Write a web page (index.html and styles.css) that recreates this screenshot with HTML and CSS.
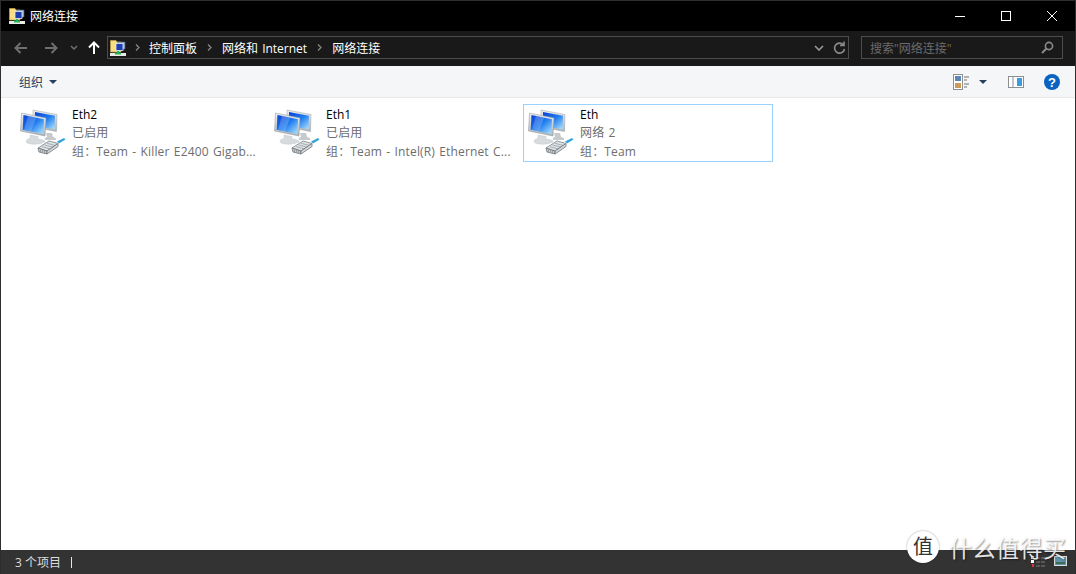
FILE: index.html
```html
<!DOCTYPE html>
<html lang="zh-CN">
<head>
    <meta charset="UTF-8">
    <title>网络连接</title>
    <link rel="stylesheet" href="styles.css">
</head>
<body>
    <svg class="defs" width="0" height="0">
        <defs>
            <linearGradient id="screen" x1="0" y1="0" x2="1" y2="1">
                <stop offset="0" stop-color="#0b3fd4"/>
                <stop offset="0.5" stop-color="#1f7df0"/>
                <stop offset="1" stop-color="#b5e6fb"/>
            </linearGradient>
            <linearGradient id="body" x1="0" y1="0" x2="0" y2="1">
                <stop offset="0" stop-color="#eceef0"/>
                <stop offset="1" stop-color="#aeb3b7"/>
            </linearGradient>
            <symbol id="net-icon" viewBox="0 0 48 48">
                <!-- back monitor -->
                <path d="M27 25 H33 L34 29 Q38 30 37 32 H26 Q25 30 28 29 Z" fill="#c6cacd"/>
                <path d="M14 2 L38 6.5 L37.5 23.5 L14 19 Z" fill="url(#body)" stroke="#9aa0a5" stroke-width="0.5"/>
                <path d="M16 4 L36 7.8 L35.6 21.5 L16 17.5 Z" fill="url(#screen)"/>
                <!-- front monitor -->
                <path d="M2.5 5 L27 10 L26 28 L1.5 23 Z" fill="url(#body)" stroke="#8f959a" stroke-width="0.5"/>
                <path d="M4.5 7 L25 11.3 L24.2 26 L3.7 21.8 Z" fill="url(#screen)"/>
                <path d="M9 8 L17 9.7 L12 23.5 L5 22 Z" fill="#fff" opacity="0.2"/>
                <path d="M11 27 L19 28.5 L19 31 Q27 32 26 34 Q17 38 8 35 Q5 32 11 30.5 Z" fill="#d8dbdd" stroke="#bcc0c3" stroke-width="0.4"/>
                <!-- plug -->
                <path d="M19 40 L30 33 L39 35.5 L28 43 Z" fill="#dfe4e7" stroke="#7a8286" stroke-width="0.8"/>
                <path d="M19 40 L28 43 L28 46 L20 44 Z" fill="#c4cace" stroke="#6d7478" stroke-width="0.8"/>
                <path d="M28 43 L39 35.5 L39 38.5 L28 46 Z" fill="#d5dadd" stroke="#6d7478" stroke-width="0.8"/>
                <path d="M21.5 41.5V44M23.5 42V44.5M25.5 42.7V45M23 38.7 L31.5 41 M25.5 37 L34 39.2 M28 35.3 L36.5 37.5" stroke="#7f878c" stroke-width="0.6"/>
                <path d="M38 33.5 L45 30 L46.5 31.5 L40 35.5 Z" fill="#35a5d8"/>
            </symbol>
            <symbol id="folder-icon" viewBox="0 0 16 16">
                <path d="M0.5 0.5 H6 L7 2 H11 V12 H0.5 Z" fill="#f8de80" stroke="#c2a44e" stroke-width="0.7"/>
                <rect x="8" y="2" width="7" height="7" fill="#9bb0d0" stroke="#53617c" stroke-width="0.6"/>
                <rect x="6" y="3.5" width="7" height="7" fill="#1c3db0" stroke="#e3e9f4" stroke-width="0.8"/>
                <rect x="7" y="11" width="2" height="2" fill="#23b45a"/>
                <rect x="0" y="13" width="16" height="3" fill="#e8eae8"/>
                <rect x="5" y="12.5" width="6" height="2" fill="#23b45a"/>
            </symbol>
        </defs>
    </svg>

    <div class="window">
        <header class="titlebar">
            <svg class="title-icon" width="16" height="16"><use href="#folder-icon"/></svg>
            <span class="title-text">网络连接</span>
            <div class="win-buttons">
                <button class="win-btn">
                    <svg width="10" height="10" viewBox="0 0 10 10"><path d="M0 5.5H10" stroke="#fff"/></svg>
                </button>
                <button class="win-btn">
                    <svg width="10" height="10" viewBox="0 0 10 10"><rect x="0.5" y="0.5" width="9" height="9" fill="none" stroke="#fff"/></svg>
                </button>
                <button class="win-btn">
                    <svg width="10" height="10" viewBox="0 0 10 10"><path d="M0 0L10 10M10 0L0 10" stroke="#fff"/></svg>
                </button>
            </div>
        </header>

        <nav class="addressbar">
            <div class="nav-buttons">
                <svg class="nav-arrow" width="14" height="12" viewBox="0 0 14 12"><path d="M13 6H2M6.5 1L1.5 6L6.5 11" fill="none" stroke="#6f6f6f" stroke-width="2"/></svg>
                <svg class="nav-arrow fwd" width="14" height="12" viewBox="0 0 14 12"><path d="M1 6H12M7.5 1L12.5 6L7.5 11" fill="none" stroke="#6f6f6f" stroke-width="2"/></svg>
                <svg class="nav-down" width="8" height="5" viewBox="0 0 8 5"><path d="M1 1L4 4L7 1" fill="none" stroke="#6f6f6f" stroke-width="1.5"/></svg>
                <svg class="nav-up" width="12" height="13" viewBox="0 0 12 13"><path d="M6 13V2M1 6.5L6 1.5L11 6.5" fill="none" stroke="#fff" stroke-width="2"/></svg>
            </div>
            <div class="path-box">
                <svg class="path-icon" width="16" height="16"><use href="#folder-icon"/></svg>
                <svg class="crumb-sep first" width="5" height="7" viewBox="0 0 5 7"><path d="M1 0.5L4 3.5L1 6.5" fill="none" stroke="#8a8a8a" stroke-width="1.2"/></svg>
                <span class="crumb">控制面板</span>
                <svg class="crumb-sep" width="5" height="7" viewBox="0 0 5 7"><path d="M1 0.5L4 3.5L1 6.5" fill="none" stroke="#8a8a8a" stroke-width="1.2"/></svg>
                <span class="crumb">网络和 Internet</span>
                <svg class="crumb-sep" width="5" height="7" viewBox="0 0 5 7"><path d="M1 0.5L4 3.5L1 6.5" fill="none" stroke="#8a8a8a" stroke-width="1.2"/></svg>
                <span class="crumb">网络连接</span>
                <svg class="path-down" width="10" height="6" viewBox="0 0 10 6"><path d="M1 1L5 5L9 1" fill="none" stroke="#9a9a9a" stroke-width="1.6"/></svg>
                <svg class="path-refresh" width="13" height="14" viewBox="0 0 13 14"><path d="M10.5 4A5 5 0 1 0 11.5 8M11 0.5V4.5H7" fill="none" stroke="#8a8a8a" stroke-width="1.6"/></svg>
            </div>
            <div class="search-box">
                <span class="search-text">搜索"网络连接"</span>
                <svg width="13" height="13" viewBox="0 0 13 13"><circle cx="8" cy="5" r="3.6" fill="none" stroke="#8a8a8a" stroke-width="1.6"/><path d="M5.5 7.5L1 12" stroke="#8a8a8a" stroke-width="2"/></svg>
            </div>
        </nav>

        <div class="toolbar">
            <span class="organize">组织</span>
            <svg class="caret" width="8" height="4" viewBox="0 0 8 4"><path d="M0 0H8L4 4Z" fill="#26405f"/></svg>
            <div class="tool-right">
                <svg class="view-icon" width="16" height="16" viewBox="0 0 16 16">
                    <rect x="0.5" y="0.5" width="9" height="15" fill="#fff" stroke="#8f8f8f"/>
                    <rect x="2" y="2" width="6" height="5" fill="#5b86b5"/>
                    <rect x="2" y="9" width="6" height="5" fill="#c99a5a"/>
                    <path d="M11 3H16M11 6H14M11 10H16M11 13H14" stroke="#6f6f6f"/>
                </svg>
                <svg class="caret view-caret" width="8" height="4" viewBox="0 0 8 4"><path d="M0 0H8L4 4Z" fill="#26405f"/></svg>
                <svg class="pane-icon" width="16" height="12" viewBox="0 0 16 12">
                    <rect x="0.5" y="0.5" width="15" height="11" fill="#fff" stroke="#8a8f96"/>
                    <rect x="9" y="2" width="5" height="8" fill="#3d9be0"/>
                    <path d="M5 1V11" stroke="#8a8f96"/>
                </svg>
                <svg class="help-icon" width="16" height="16" viewBox="0 0 16 16">
                    <circle cx="8" cy="8" r="8" fill="#0a62c2"/>
                    <text x="8" y="12.5" text-anchor="middle" class="help-mark">?</text>
                </svg>
            </div>
        </div>

        <main class="content">
            <div class="conn-item">
                <svg class="conn-icon" width="48" height="48"><use href="#net-icon"/></svg>
                <div class="conn-info">
                    <div class="conn-name">Eth2</div>
                    <div class="conn-line">已启用</div>
                    <div class="conn-line">组：Team - Killer E2400 Gigab...</div>
                </div>
            </div>
            <div class="conn-item">
                <svg class="conn-icon" width="48" height="48"><use href="#net-icon"/></svg>
                <div class="conn-info">
                    <div class="conn-name">Eth1</div>
                    <div class="conn-line">已启用</div>
                    <div class="conn-line">组：Team - Intel(R) Ethernet C...</div>
                </div>
            </div>
            <div class="conn-item selected">
                <svg class="conn-icon" width="48" height="48"><use href="#net-icon"/></svg>
                <div class="conn-info">
                    <div class="conn-name">Eth</div>
                    <div class="conn-line">网络 2</div>
                    <div class="conn-line">组：Team</div>
                </div>
            </div>
        </main>

        <footer class="statusbar">
            <span class="status-count">3 个项目</span>
            <span class="status-sep"></span>
            <div class="status-views">
                <svg width="16" height="12" viewBox="0 0 16 12">
                    <rect x="0" y="0" width="3" height="3" fill="#cfd6e0"/>
                    <rect x="0" y="4" width="3" height="3" fill="#fff"/>
                    <rect x="1" y="8" width="2" height="3" fill="#d33"/>
                    <path d="M5 2H15M5 6H15M5 10H15" stroke="#7d7d7d" stroke-dasharray="4 1"/>
                </svg>
                <svg width="13" height="10" viewBox="0 0 13 10">
                    <rect x="0.5" y="0.5" width="12" height="9" fill="#5f93a8" stroke="#d8dde0"/>
                    <rect x="2" y="6" width="9" height="2" fill="#3f6a58"/>
                </svg>
            </div>
        </footer>

        <div class="watermark">
            <span class="wm-logo">值</span>
            <span class="wm-text">什么值得买</span>
        </div>
    </div>
</body>
</html>
```

FILE: styles.css
```css
* {
    box-sizing: border-box;
}

html, body {
    margin: 0;
    padding: 0;
    height: 100%;
}

body {
    font-family: "Open Sans", "Noto Sans CJK SC", sans-serif;
    font-size: 12px;
    background-color: #fff;
    overflow: hidden;
}

.defs {
    position: absolute;
}

.window {
    position: relative;
    height: 100vh;
    display: flex;
    flex-direction: column;
    border: 1px solid #2e2e2e;
    border-bottom: none;
}

/* title bar */
.titlebar {
    height: 30px;
    background-color: #000;
    display: flex;
    align-items: center;
    padding-left: 8px;
    color: #fff;
    flex-shrink: 0;
}

.title-icon {
    margin-right: 5px;
}

.title-text {
    font-size: 12px;
    padding-bottom: 1px;
}

.win-buttons {
    margin-left: auto;
    display: flex;
    align-items: center;
}

.win-btn {
    width: 46px;
    height: 30px;
    padding: 0;
    border: none;
    background: none;
    display: flex;
    align-items: center;
    justify-content: center;
}

/* address bar */
.addressbar {
    height: 35px;
    background-color: #191919;
    display: flex;
    align-items: flex-start;
    padding: 5px 12px 0 13px;
    flex-shrink: 0;
}

.nav-buttons {
    height: 23px;
    display: flex;
    align-items: center;
    width: 93px;
    flex-shrink: 0;
}

.nav-arrow.fwd {
    margin-left: 16px;
}

.nav-down {
    margin-left: 12px;
}

.nav-up {
    margin-left: 10px;
}

.path-box {
    width: 742px;
    height: 23px;
    flex-shrink: 0;
    border: 1px solid #4d4d4d;
    display: flex;
    align-items: center;
    padding-left: 2px;
    color: #fff;
}

.path-icon {
    margin-right: 9px;
}

.crumb {
    word-spacing: 1px;
}

.crumb-sep {
    margin: 0 10px;
}

.crumb-sep.first {
    margin: 0 9px 0 0;
}

.path-down {
    margin-left: auto;
}

.path-refresh {
    margin: 0 2px 0 9px;
}

.search-box {
    width: 202px;
    height: 23px;
    flex-shrink: 0;
    margin-left: 12px;
    border: 1px solid #4d4d4d;
    display: flex;
    align-items: center;
    justify-content: space-between;
    padding: 0 8px;
    color: #6b6b6b;
}

/* toolbar */
.toolbar {
    height: 32px;
    background-color: #f5f6f7;
    border-bottom: 1px solid #e7e8ea;
    display: flex;
    align-items: center;
    padding-left: 18px;
    color: #26405f;
    flex-shrink: 0;
}

.caret {
    margin-left: 6px;
}

.tool-right {
    margin-left: auto;
    display: flex;
    align-items: center;
    padding-right: 15px;
}

.view-caret {
    margin-left: 10px;
}

.pane-icon {
    margin-left: 21px;
}

.help-icon {
    margin-left: 20px;
}

.help-mark {
    font-family: "Liberation Sans", sans-serif;
    font-size: 13px;
    font-weight: bold;
    fill: #fff;
}

/* items */
.content {
    flex: 1;
    background-color: #fff;
    display: grid;
    grid-template-columns: repeat(3, 250px);
    grid-auto-rows: 58px;
    column-gap: 4px;
    padding: 6px 0 0 14px;
    min-height: 0;
}

.conn-item {
    display: flex;
    border: 1px solid transparent;
    padding: 0 0 0 3px;
    min-width: 0;
}

.conn-item.selected {
    border-color: #99d1ff;
}

.conn-icon {
    flex-shrink: 0;
    margin-top: 3px;
}

.conn-info {
    margin-left: 5px;
    padding-top: 1px;
    width: 186px;
    min-width: 0;
}

.conn-name {
    color: #000;
    line-height: 18px;
}

.conn-line {
    color: #6d6d6d;
    line-height: 18.5px;
    white-space: nowrap;
    letter-spacing: 0.15px;
    word-spacing: 1px;
}

/* status bar */
.statusbar {
    height: 24px;
    background-color: #333;
    color: #dcdcdc;
    display: flex;
    align-items: center;
    padding-left: 14px;
    flex-shrink: 0;
}

.status-sep {
    width: 1px;
    height: 11px;
    background-color: #e5e5e5;
    margin-left: 10px;
}

.status-views {
    margin-left: auto;
    display: flex;
    align-items: flex-start;
    gap: 7px;
    padding-right: 8px;
    align-self: flex-start;
    padding-top: 6px;
}

/* site watermark over the screenshot */
.watermark {
    position: absolute;
    left: 906px;
    top: 529px;
    display: flex;
    align-items: center;
    gap: 10px;
    color: rgba(255, 255, 255, 0.88);
    text-shadow: 1px 1px 2px rgba(0, 0, 0, 0.45);
}

.wm-logo {
    width: 32px;
    height: 32px;
    border-radius: 50%;
    background-color: #fff;
    color: #333;
    font-size: 20px;
    line-height: 32px;
    text-align: center;
    text-shadow: none;
    box-shadow: 0 0 2px rgba(0, 0, 0, 0.4);
}

.wm-text {
    font-size: 23px;
    letter-spacing: 0.5px;
}
```
